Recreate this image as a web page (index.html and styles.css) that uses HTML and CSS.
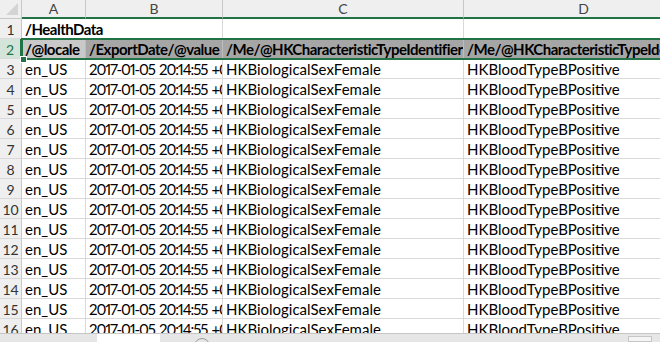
FILE: index.html
```html
<!DOCTYPE html>
<html lang="en">
<head>
  <meta charset="UTF-8">
  <title>HealthData export</title>
  <link rel="stylesheet" href="styles.css">
</head>
<body>
  <div class="window">
    <div class="sheet">
      <div class="corner"><span class="tri"></span></div>
      <div class="colhead">A</div>
      <div class="colhead">B</div>
      <div class="colhead">C</div>
      <div class="colhead">D</div>

      <div class="rownum">1</div>
      <div class="cell bold span2">/HealthData</div>
      <div class="cell"></div>
      <div class="cell"></div>

      <div class="rownum sel">2</div>
      <div class="cell bold hdr active">/@locale</div>
      <div class="cell bold hdr">/ExportDate/@value</div>
      <div class="cell bold hdr">/Me/@HKCharacteristicTypeIdentifierBiologicalSex</div>
      <div class="cell bold hdr">/Me/@HKCharacteristicTypeIdentifierBloodType</div>

      <div id="rows" class="contents"></div>

      <div class="selection"><span class="handle"></span></div>
    </div>
    <div class="tabbar">
      <div class="tab"></div>
      <div class="addsheet"></div>
      <div class="scroll"></div>
    </div>
  </div>

  <script>
    const rows = document.getElementById("rows");
    let html = "";
    for (let n = 3; n <= 16; n++) {
      html += `<div class="rownum">${n}</div>
        <div class="cell">en_US</div>
        <div class="cell date">2017-01-05 20:14:55 +0000</div>
        <div class="cell">HKBiologicalSexFemale</div>
        <div class="cell">HKBloodTypeBPositive</div>`;
    }
    rows.innerHTML = html;
  </script>
</body>
</html>
```

FILE: styles.css
```css
:root {
  --grid: #d9d9d9;
  --head-bg: #efefef;
  --head-line: #c8c8c8;
  --green: #217346;
  --text: #000000;
}
body {
  margin: 0;
  font-family: Lato, "Liberation Sans", sans-serif;
  background: #ffffff;
}
.window {
  width: 660px;
  height: 342px;
  overflow: hidden;
  display: flex;
  flex-direction: column;
}
.sheet {
  position: relative;
  flex-shrink: 0;
  height: 333px;
  overflow: hidden;
  display: grid;
  grid-template-columns: 22px 64px 137px 241px 240px;
  grid-template-rows: 19px;
  grid-auto-rows: 20px;
}
.contents {
  display: contents;
}
.corner {
  background: var(--head-bg);
  border-right: 1px solid var(--head-line);
  border-bottom: 1px solid var(--head-line);
  position: relative;
}
.tri {
  position: absolute;
  right: 3px;
  bottom: 3px;
  width: 0;
  height: 0;
  border-left: 12px solid transparent;
  border-bottom: 12px solid #d4d4d4;
}
.colhead {
  background: var(--head-bg);
  border-right: 1px solid var(--head-line);
  border-bottom: 2px solid var(--green);
  color: #444;
  font-size: 14px;
  text-align: center;
  line-height: 18px;
}
.rownum {
  background: var(--head-bg);
  border-right: 1px solid var(--head-line);
  border-bottom: 1px solid var(--grid);
  color: #333;
  font-size: 14px;
  text-align: center;
  line-height: 21px;
}
.rownum.sel {
  background: #d3e5da;
  color: var(--green);
  border-right: 2px solid var(--green);
}
.cell {
  border-right: 1px solid var(--grid);
  border-bottom: 1px solid var(--grid);
  color: var(--text);
  font-size: 15px;
  line-height: 21px;
  padding-left: 3px;
  white-space: nowrap;
  overflow: hidden;
}
.date {
  font-variant-numeric: proportional-nums;
  letter-spacing: -1.1px;
  word-spacing: 1.5px;
}
.span2 {
  grid-column: span 2;
  overflow: visible;
}
.bold {
  font-weight: bold;
  letter-spacing: -0.5px;
}
.hdr {
  background: #a6a6a6;
  border-right-color: #bdbdbd;
}
.hdr.active {
  background: #c9c9c9;
}
.selection {
  position: absolute;
  left: 21px;
  top: 38px;
  width: 660px;
  height: 18px;
  border: 2px solid var(--green);
  border-right: none;
}
.handle {
  position: absolute;
  left: -3px;
  bottom: -5px;
  width: 5px;
  height: 5px;
  background: var(--green);
  border: 1px solid #fff;
}
.tabbar {
  height: 9px;
  overflow: hidden;
  background: #e6e6e6;
  border-top: 1px solid #c6c6c6;
  display: flex;
}
.tab {
  margin-left: 97px;
  width: 63px;
  background: #ffffff;
}
.addsheet {
  flex-shrink: 0;
  margin-left: 34px;
  margin-top: 4px;
  width: 14px;
  height: 14px;
  border: 1px solid #9a9a9a;
  border-radius: 50%;
}
.scroll {
  margin-left: auto;
  margin-right: 8px;
  margin-top: 2px;
  width: 22px;
  background: #f4f4f4;
  border: 1px solid #c6c6c6;
}
```
